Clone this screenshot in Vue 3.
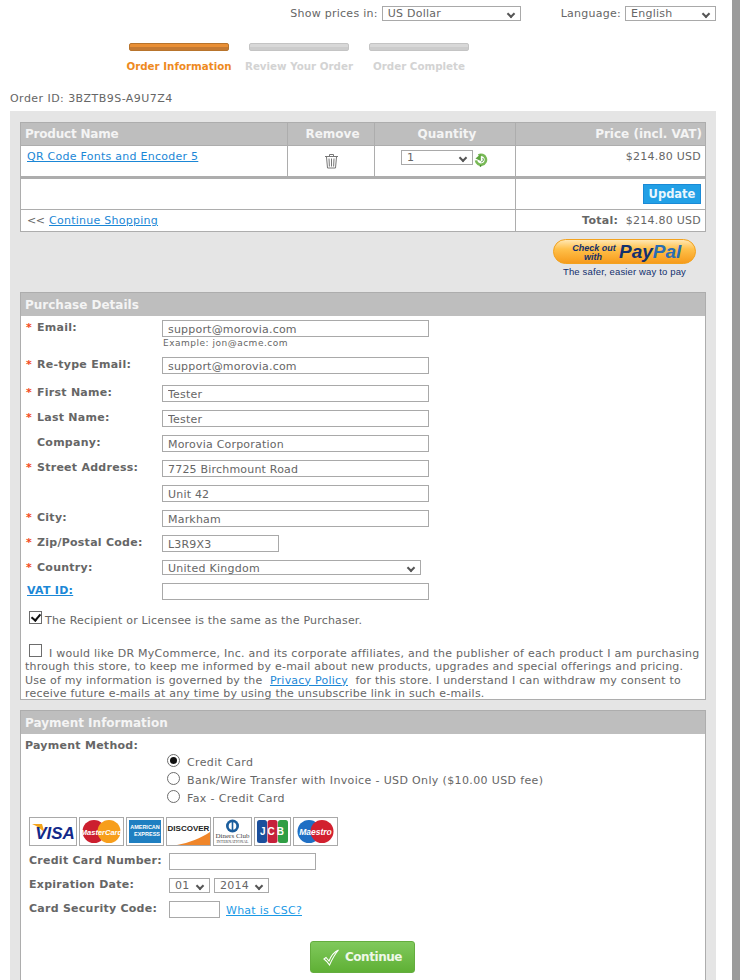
<script setup>
const purchaseRows = [
  { label: 'First Name:', value: 'Tester', required: true },
  { label: 'Last Name:', value: 'Tester', required: true },
  { label: 'Company:', value: 'Morovia Corporation', required: false },
  { label: 'Street Address:', value: '7725 Birchmount Road', required: true },
  { label: '', value: 'Unit 42', required: false },
  { label: 'City:', value: 'Markham', required: true }
]
</script>

<template>
  <div class="page">
    <div class="topbar">
      <span>Show prices in:</span>
      <div class="sel sel-currency">US Dollar</div>
      <span class="lang-label">Language:</span>
      <div class="sel sel-lang">English</div>
    </div>

    <div class="steps">
      <div class="step active"><div class="step-bar"></div><div class="step-name">Order Information</div></div>
      <div class="step"><div class="step-bar"></div><div class="step-name">Review Your Order</div></div>
      <div class="step"><div class="step-bar"></div><div class="step-name">Order Complete</div></div>
    </div>

    <div class="order-id">Order ID: 3BZTB9S-A9U7Z4</div>

    <div class="wrap">
      <table class="cart">
        <colgroup>
          <col style="width: 267px" />
          <col style="width: 87px" />
          <col style="width: 141px" />
          <col />
        </colgroup>
        <thead>
          <tr>
            <th class="left">Product Name</th>
            <th class="th-remove">Remove</th>
            <th class="th-qty">Quantity</th>
            <th class="right th-price">Price (incl. VAT)</th>
          </tr>
        </thead>
        <tbody>
          <tr class="item">
            <td class="name"><a href="#">QR Code Fonts and Encoder 5</a></td>
            <td class="center">
              <svg class="trash" width="15" height="16" viewBox="0 0 15 16" fill="none" stroke="#777" stroke-width="1">
                <path d="M1 3.5h13M5.5 3V1.5h4V3M2.5 4l1 11h8l1-11" />
                <path d="M5 5.5l.4 8M7.5 5.5v8M10 5.5l-.4 8" />
              </svg>
            </td>
            <td class="qty-cell">
              <div class="qty">
                <div class="sel sel-qty">1</div>
                <svg class="refresh" width="14" height="14" viewBox="0 0 14 14">
                  <path d="M4.500 2.400a5 5 0 1 1-2.500 5" fill="none" stroke="#78b956" stroke-width="2.600" />
                  <path d="M6.800 1v7L1.500 5.500z" fill="#5fa53f" />
                  <path d="M8.800 5.200a2.300 2.300 0 0 1-1.500 3.700" fill="none" stroke="#3f8a2b" stroke-width="1" />
                  <path d="M6.500 13.800v-1.700" stroke="#3f8a2b" stroke-width="1.400" />
                </svg>
              </div>
            </td>
            <td class="right price">$214.80 USD</td>
          </tr>
          <tr class="actions">
            <td colspan="3"></td>
            <td class="right"><button class="update" type="button">Update</button></td>
          </tr>
          <tr class="total">
            <td colspan="3" class="shop"><span class="back">&lt;&lt;</span><a href="#">Continue Shopping</a></td>
            <td class="right"><b>Total:</b>&nbsp; $214.80 USD</td>
          </tr>
        </tbody>
      </table>

      <div class="paypal-row">
        <div class="paypal">
          <svg width="143" height="25" viewBox="0 0 143 25">
            <defs>
              <linearGradient id="pp" x1="0" y1="0" x2="0" y2="1">
                <stop offset="0" stop-color="#ffe9b8" />
                <stop offset="0.4" stop-color="#ffc04a" />
                <stop offset="1" stop-color="#f69a1a" />
              </linearGradient>
            </defs>
            <rect x="0.5" y="0.5" width="142" height="24" rx="12" fill="url(#pp)" stroke="#f2a21f" />
            <text x="41" y="12" class="pp-small" text-anchor="middle">Check out</text>
            <text x="40" y="21" class="pp-small" text-anchor="middle">with</text>
            <text x="66" y="19" class="pp-logo" fill="#12306e">Pay<tspan fill="#2a6db3">Pal</tspan></text>
          </svg>
          <div class="pp-tag">The safer, easier way to pay</div>
        </div>
      </div>

      <section class="panel details">
        <h2>Purchase Details</h2>
        <div class="body">
          <div class="row">
            <label><span class="star">*</span>Email:</label>
            <div>
              <input class="field" type="text" value="support@morovia.com" />
              <div class="hint">Example: jon@acme.com</div>
            </div>
          </div>
          <div class="row retype">
            <label><span class="star">*</span>Re-type Email:</label>
            <input class="field" type="text" value="support@morovia.com" />
          </div>
          <div v-for="(r, i) in purchaseRows" :key="i" class="row">
            <label><span class="star">{{ r.required ? '*' : '' }}</span>{{ r.label }}</label>
            <input class="field" type="text" :value="r.value" />
          </div>
          <div class="row">
            <label><span class="star">*</span>Zip/Postal Code:</label>
            <input class="field zip" type="text" value="L3R9X3" />
          </div>
          <div class="row">
            <label><span class="star">*</span>Country:</label>
            <div class="sel sel-country">United Kingdom</div>
          </div>
          <div class="row">
            <label class="vat"><a href="#">VAT ID:</a></label>
            <input class="field" type="text" />
          </div>
          <div class="same">
            <input class="check" type="checkbox" checked />
            <span>The Recipient or Licensee is the same as the Purchaser.</span>
          </div>
          <p class="consent">
            <input class="check inline" type="checkbox" /><span class="first">I would like DR MyCommerce, Inc. and its corporate affiliates, and the publisher of each product I am purchasing</span><br />
            through this store, to keep me informed by e-mail about new products, upgrades and special offerings and pricing.<br />
            Use of my information is governed by the&nbsp; <a href="#">Privacy Policy</a>&nbsp; for this store. I understand I can withdraw my consent to<br />
            receive future e-mails at any time by using the unsubscribe link in such e-mails.
          </p>
        </div>
      </section>

      <section class="panel payment">
        <h2>Payment Information</h2>
        <div class="body">
          <div class="method-label">Payment Method:</div>
          <div class="methods">
            <div class="method"><input class="radio" type="radio" name="pay" checked /><span>Credit Card</span></div>
            <div class="method"><input class="radio" type="radio" name="pay" /><span>Bank/Wire Transfer with Invoice - USD Only ($10.00 USD fee)</span></div>
            <div class="method"><input class="radio" type="radio" name="pay" /><span>Fax - Credit Card</span></div>
          </div>

          <div class="cards">
            <svg class="card" width="48" height="29" viewBox="0 0 46 27">
              <path d="M2 6h10l3 10C12 11 7 8 2 6z" fill="#f4a41c" />
              <text x="25" y="21" class="visa" text-anchor="middle">VISA</text>
            </svg>
            <svg class="card" width="45" height="29" viewBox="0 0 43 27">
              <circle cx="14" cy="13.5" r="11.5" fill="#cc1f2f" />
              <circle cx="29" cy="13.5" r="11.5" fill="#f79e1b" />
              <text x="21.5" y="16.500" class="mc" text-anchor="middle">MasterCard</text>
            </svg>
            <svg class="card" width="38" height="29" viewBox="0 0 36 27">
              <rect x="2" y="2" width="32" height="23" fill="#1f7fc1" />
              <text x="18" y="11" class="amex" text-anchor="middle">AMERICAN</text>
              <text x="20" y="18" class="amex" text-anchor="middle">EXPRESS</text>
            </svg>
            <svg class="card" width="45" height="29" viewBox="0 0 43 27">
              <path d="M10 27C22 25 34 20 43 14v13z" fill="#f0862a" />
              <text x="21.5" y="13" class="disc" text-anchor="middle">DISCOVER</text>
            </svg>
            <svg class="card" width="39" height="29" viewBox="0 0 37 27">
              <circle cx="18.5" cy="8" r="6.5" fill="#1b5d9c" />
              <circle cx="18.5" cy="8" r="3.8" fill="#fff" />
              <rect x="17.7" y="3" width="1.6" height="10" fill="#1b5d9c" />
              <text x="18.5" y="20" class="diners" text-anchor="middle">Diners Club</text>
              <text x="18.5" y="25" class="diners-sm" text-anchor="middle">INTERNATIONAL</text>
            </svg>
            <svg class="card" width="37" height="29" viewBox="0 0 35 27">
              <rect x="2" y="2" width="10" height="23" rx="2.5" fill="#1b4f9c" />
              <rect x="12.500" y="2" width="10" height="23" rx="2.5" fill="#c6203a" />
              <rect x="23" y="2" width="10" height="23" rx="2.5" fill="#2f9e44" />
              <text x="18" y="17" class="jcb" text-anchor="middle">JCB</text>
            </svg>
            <svg class="card" width="45" height="29" viewBox="0 0 43 27">
              <circle cx="15" cy="13.5" r="11.5" fill="#1f6fc4" />
              <circle cx="28" cy="13.5" r="11.5" fill="#d2202f" />
              <text x="21.5" y="16.500" class="mc wide" text-anchor="middle">Maestro</text>
            </svg>
          </div>

          <div class="pay-row number">
            <label class="nudge">Credit Card Number:</label>
            <input class="field card-num" type="text" />
          </div>
          <div class="pay-row expiry">
            <label>Expiration Date:</label>
            <div class="sel sel-month">01</div>
            <div class="sel sel-year">2014</div>
          </div>
          <div class="pay-row csc">
            <label class="nudge">Card Security Code:</label>
            <input class="field csc-input" type="text" />
            <a class="csc-link" href="#">What is CSC?</a>
          </div>

          <div class="continue-row">
            <button class="continue" type="button">
              <svg width="17" height="17" viewBox="0 0 17 17" fill="none" stroke="#fff" stroke-width="1.1">
                <path d="M1 10l2-1.5 3 3.5C8 7 11 3 15.5 1 12 5 9 10.5 6.5 16 5 13.500 3 11.500 1 10z" />
              </svg>
              Continue
            </button>
          </div>
        </div>
      </section>
    </div>
  </div>
</template>

<style>
html,
body {
  margin: 0;
  background: #fff;
}
</style>

<style scoped>
.page {
  box-sizing: content-box;
  width: 732px;
  height: 980px;
  overflow: hidden;
  border-right: 8px solid #9b9b9b;
  background: #fff;
  font-family: "DejaVu Sans", Verdana, sans-serif;
  font-size: 11px;
  line-height: 14px;
  letter-spacing: 0.26px;
  color: #666;
}

a {
  color: #1b87d6;
}

.topbar {
  display: flex;
  justify-content: flex-end;
  align-items: center;
  height: 15px;
  padding: 6px 16px 0 0;
}

.lang-label {
  margin-left: 40px;
}

.sel {
  position: relative;
  box-sizing: border-box;
  height: 15px;
  line-height: 13px;
  padding-left: 5px;
  border: 1px solid #a9a9a9;
  background: #fff;
  color: #666;
}

.sel::after {
  content: "";
  position: absolute;
  right: 6px;
  bottom: 3px;
  width: 4px;
  height: 4px;
  border-right: 2px solid #555;
  border-bottom: 2px solid #555;
  transform: rotate(45deg);
}

.sel-currency {
  width: 139px;
  margin-left: 4px;
}

.sel-lang {
  width: 91px;
  margin-left: 4px;
}

.steps {
  display: flex;
  padding: 22px 0 0 119px;
}

.step {
  width: 120px;
  color: #d3d3d3;
}

.step-bar {
  box-sizing: border-box;
  width: 100px;
  height: 8px;
  margin: 0 auto;
  border: 1px solid #c4c4c4;
  border-radius: 2px;
  background: linear-gradient(#d8d8d8 50%, #cccccc 50%);
}

.step-name {
  margin-top: 8px;
  text-align: center;
  white-space: nowrap;
  font-size: 10.3px;
  letter-spacing: 0;
  font-weight: bold;
}

.step.active {
  color: #ee8a1e;
}

.step.active .step-bar {
  border-color: #b8742c;
  background: linear-gradient(#e98f35 50%, #c47a33 50%);
}

.order-id {
  margin-top: 19px;
  padding-left: 10px;
  letter-spacing: 0.45px;
}

.wrap {
  box-sizing: border-box;
  width: 706px;
  margin: 5px 0 0 10px;
  padding: 11px 10px 0;
  background: #e5e5e5;
  min-height: 870px;
}

.cart {
  width: 686px;
  table-layout: fixed;
  border-collapse: collapse;
  background: #fff;
}

.cart th,
.cart td {
  box-sizing: border-box;
  padding: 0 4px;
  border: 1px solid #adadad;
  font-weight: normal;
  vertical-align: middle;
}

.cart th {
  height: 23px;
  background: #bebebe;
  color: #f4f4f4;
  font-size: 12px;
  letter-spacing: 0;
  font-weight: bold;
  text-align: center;
}

.cart th.left {
  text-align: left;
  letter-spacing: -0.2px;
}

.cart th.th-remove {
  padding-left: 7px;
}

.cart th.th-qty {
  padding-left: 8px;
}

.cart th.th-price {
  padding-right: 3px;
}

.cart .right {
  text-align: right;
}

.cart .center {
  text-align: center;
}

.item td {
  height: 32px;
  border-bottom: 3px solid #adadad;
}

.item .name,
.item .price,
.item .qty-cell {
  vertical-align: top;
  padding-top: 4px;
}

.item .name {
  padding-left: 6px;
}

.trash {
  display: block;
  margin: 0 auto;
}

.qty {
  display: flex;
  align-items: flex-start;
  gap: 1px;
  padding-left: 22px;
}

.refresh {
  margin-top: 3px;
}

.sel-qty {
  width: 72px;
  height: 15px;
}

.actions td {
  height: 32px;
}

.update {
  display: inline-block;
  width: 58px;
  height: 20px;
  padding: 0;
  border: 1px solid #1a8ad6;
  background: #22a0e6;
  color: #eaf6fd;
  font: bold 11.5px "DejaVu Sans", Verdana, sans-serif;
}

.cart .total td {
  height: 22px;
  padding-top: 1px;
}

.cart .shop {
  padding-left: 6px;
}

.back {
  display: inline-block;
  width: 22px;
  letter-spacing: -0.5px;
}

.paypal-row {
  display: flex;
  justify-content: flex-end;
  padding: 7px 10px 0 0;
  height: 53px;
}

.paypal svg {
  display: block;
}

.pp-small {
  font: italic bold 9px "Liberation Sans", Arial, sans-serif;
  letter-spacing: 0;
  fill: #12306e;
}

.pp-logo {
  font: italic bold 19px "Liberation Sans", Arial, sans-serif;
  letter-spacing: 0;
}

.pp-tag {
  margin-top: 1px;
  text-align: center;
  font-family: "Liberation Sans", Arial, sans-serif;
  font-size: 9.5px;
  letter-spacing: 0.15px;
  line-height: 14px;
  color: #12306e;
}

.panel {
  box-sizing: border-box;
  border: 1px solid #adadad;
  background: #fff;
}

.panel h2 {
  margin: 0;
  height: 23px;
  padding-left: 4px;
  background: #bebebe;
  color: #f4f4f4;
  font-size: 12px;
  letter-spacing: 0;
  line-height: 25px;
  font-weight: bold;
}

.details {
  height: 408px;
}

.details .body {
  padding-top: 4px;
}

.row {
  display: grid;
  grid-template-columns: 141px auto;
  margin-bottom: 8px;
}

.row label,
.method-label,
.pay-row label {
  font-weight: bold;
}

.row label {
  padding: 1px 0 0 5px;
  line-height: 14px;
}

.star {
  display: inline-block;
  width: 11px;
  color: #f2491b;
  font-weight: bold;
}

.row .vat {
  padding-left: 6px;
}

.field {
  display: block;
  box-sizing: border-box;
  width: 267px;
  height: 17px;
  padding: 1px 5px 0;
  border: 1px solid #a9a9a9;
  background: #fff;
  color: #666;
  letter-spacing: 0.2px;
  font: 11px "DejaVu Sans", Verdana, sans-serif;
}

.zip {
  width: 117px;
}

.hint {
  margin: 1px 0 0 1px;
  font-size: 9px;
  letter-spacing: 0.5px;
  line-height: 11px;
}

.retype {
  margin-bottom: 11px;
}

.sel-country {
  width: 259px;
  line-height: 15px;
}

.check {
  appearance: none;
  box-sizing: border-box;
  position: relative;
  width: 13px;
  height: 13px;
  margin: 0;
  border: 1px solid #6d6d6d;
  background: #fff;
}

.check:checked::after {
  content: "";
  position: absolute;
  left: 3px;
  top: 0;
  width: 4px;
  height: 7px;
  border-right: 2px solid #111;
  border-bottom: 2px solid #111;
  transform: rotate(40deg);
}

.same {
  display: flex;
  align-items: flex-start;
  gap: 3px;
  margin: 11px 0 0 8px;
  letter-spacing: 0.19px;
}

.same span {
  margin-top: 3px;
}

.consent {
  margin: 16px 0 0 4px;
  line-height: 13.300px;
  letter-spacing: 0.22px;
  white-space: nowrap;
}

.consent .first {
  letter-spacing: 0.26px;
}

.check.inline {
  display: inline-block;
  margin: 0 7px 0 4px;
  vertical-align: 0;
}

.payment {
  margin-top: 10px;
  height: 300px;
}

.method-label {
  padding: 5px 0 0 4px;
}

.methods {
  padding: 1px 0 0 146px;
}

.method {
  display: flex;
  align-items: center;
  gap: 7px;
  height: 18px;
  letter-spacing: 0.36px;
}

.radio {
  appearance: none;
  box-sizing: border-box;
  position: relative;
  width: 13px;
  height: 13px;
  margin: -5px 0 0;
  border: 1px solid #6d6d6d;
  border-radius: 50%;
  background: #fff;
}

.radio:checked::after {
  content: "";
  position: absolute;
  left: 2px;
  top: 2px;
  width: 7px;
  height: 7px;
  border-radius: 50%;
  background: #111;
}

.cards {
  display: flex;
  gap: 2px;
  padding: 9px 0 0 8px;
}

.card {
  box-sizing: border-box;
  display: block;
  border: 1px solid #a9a9a9;
  background: #fff;
}

.visa {
  font: italic bold 17px "Liberation Sans", Arial, sans-serif;
  letter-spacing: 0;
  fill: #12298a;
}

.mc {
  font: italic bold 7.500px "Liberation Sans", Arial, sans-serif;
  letter-spacing: 0;
  fill: #fff;
}

.mc.wide {
  font-size: 8.500px;
}

.amex {
  font: bold 5.500px "Liberation Sans", Arial, sans-serif;
  letter-spacing: 0;
  fill: #fff;
}

.disc {
  font: bold 8px "Liberation Sans", Arial, sans-serif;
  letter-spacing: 0;
  fill: #222;
}

.diners {
  font: 7px "Liberation Serif", serif;
  letter-spacing: 0;
  fill: #444;
}

.diners-sm {
  font: 4px "Liberation Serif", serif;
  letter-spacing: 0;
  fill: #444;
}

.jcb {
  font: bold 10px "Liberation Sans", Arial, sans-serif;
  letter-spacing: 2px;
  fill: #fff;
}

.pay-row {
  display: flex;
  align-items: flex-start;
  padding-left: 8px;
}

.pay-row label {
  width: 140px;
  flex: none;
  white-space: nowrap;
}

.pay-row .nudge {
  padding-top: 1px;
}

.number {
  margin-top: 7px;
}

.expiry {
  margin-top: 8px;
}

.csc {
  margin-top: 8px;
}

.card-num {
  width: 147px;
}

.sel-month {
  width: 41px;
}

.sel-year {
  width: 55px;
  margin-left: 4px;
}

.csc-input {
  width: 51px;
}

.csc-link {
  margin: 3px 0 0 6px;
  font-size: 11px;
  line-height: 14px;
  color: #1b9ae6;
}

.continue-row {
  padding: 23px 0 0 289px;
}

.continue {
  display: flex;
  align-items: center;
  justify-content: center;
  gap: 5px;
  box-sizing: border-box;
  width: 105px;
  height: 32px;
  padding: 0;
  border: 1px solid #64ad3e;
  border-radius: 3px;
  background: linear-gradient(#80c95c, #5fb035);
  color: #eef8e8;
  font: bold 12px "DejaVu Sans", Verdana, sans-serif;
  letter-spacing: -0.45px;
}
</style>
